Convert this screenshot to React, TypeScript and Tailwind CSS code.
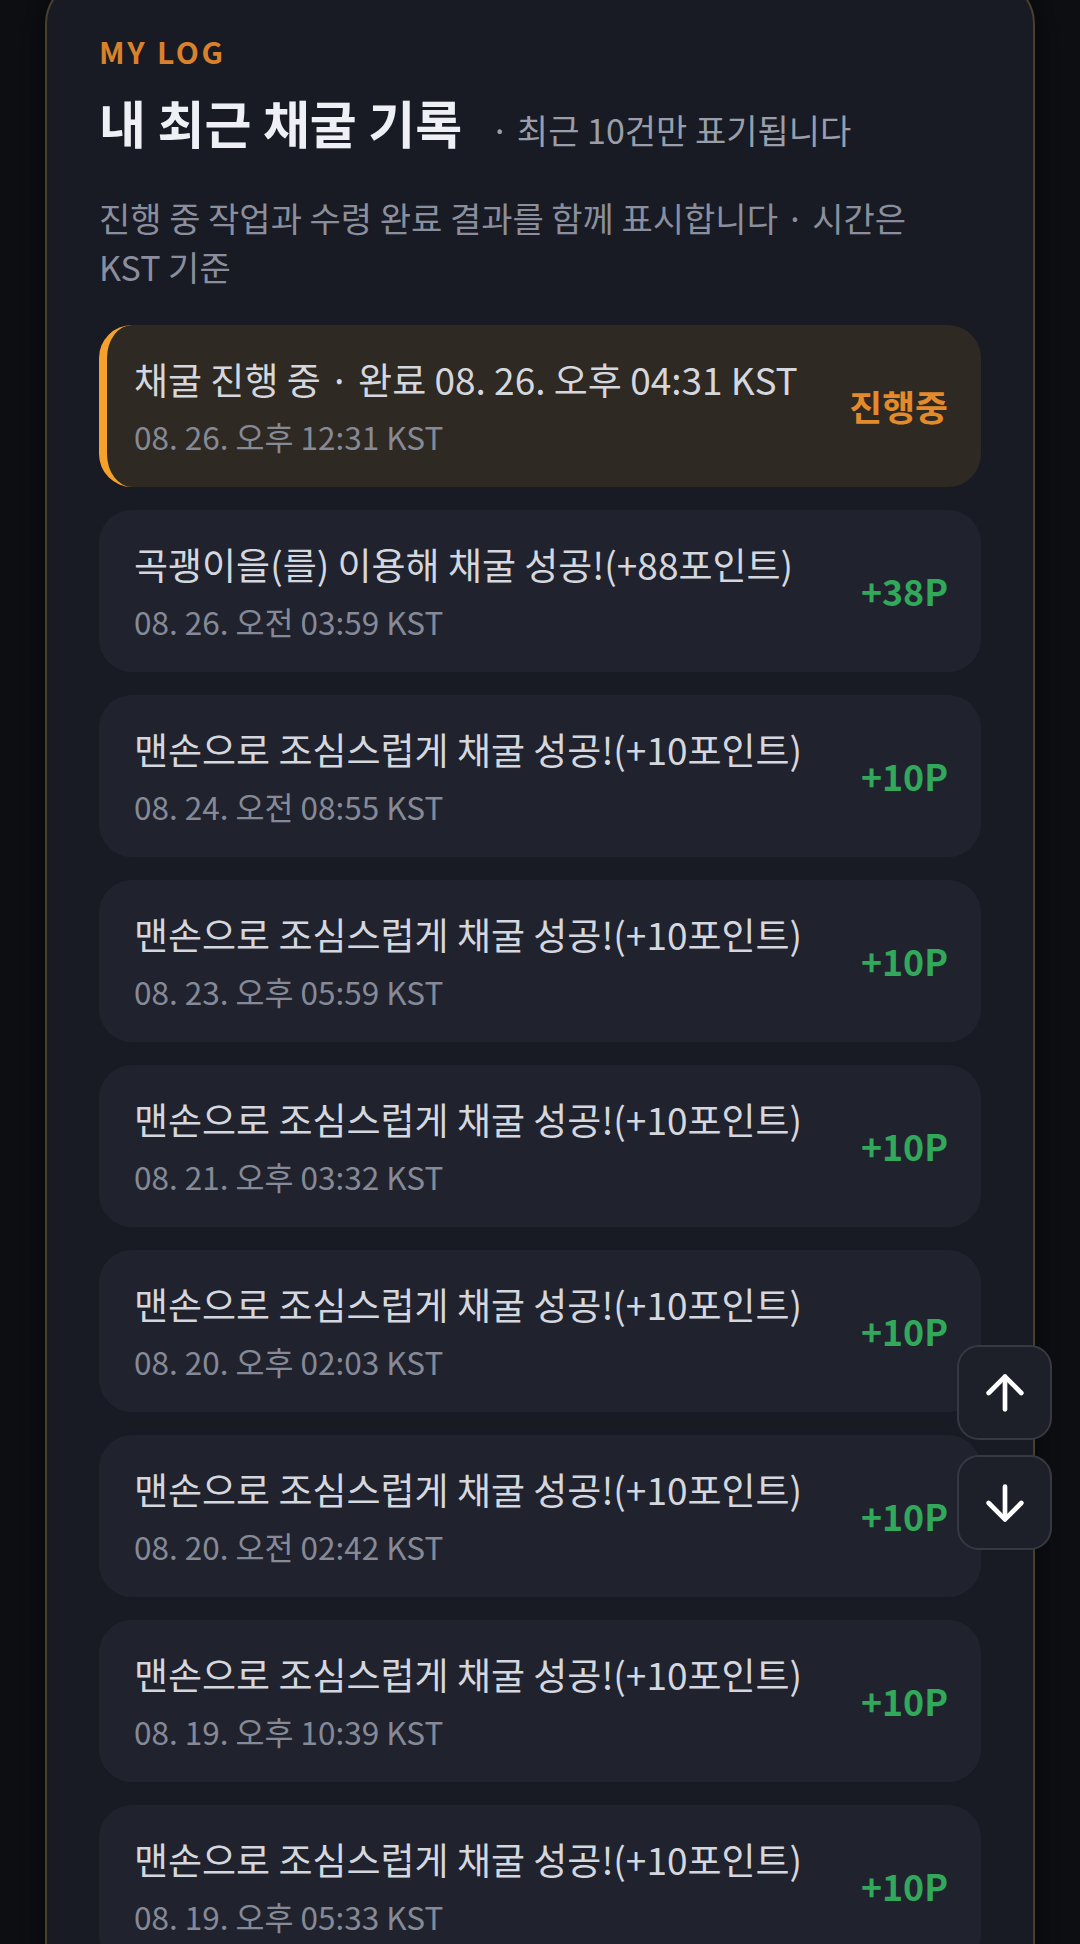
import React from "react";
import { ArrowUp, ArrowDown } from "lucide-react";

type Item = { title: string; date: string; value: string; active?: boolean };

const items: Item[] = [
  { title: "채굴 진행 중 · 완료 08. 26. 오후 04:31 KST", date: "08. 26. 오후 12:31 KST", value: "진행중", active: true },
  { title: "곡괭이을(를) 이용해 채굴 성공!(+88포인트)", date: "08. 26. 오전 03:59 KST", value: "+38P" },
  { title: "맨손으로 조심스럽게 채굴 성공!(+10포인트)", date: "08. 24. 오전 08:55 KST", value: "+10P" },
  { title: "맨손으로 조심스럽게 채굴 성공!(+10포인트)", date: "08. 23. 오후 05:59 KST", value: "+10P" },
  { title: "맨손으로 조심스럽게 채굴 성공!(+10포인트)", date: "08. 21. 오후 03:32 KST", value: "+10P" },
  { title: "맨손으로 조심스럽게 채굴 성공!(+10포인트)", date: "08. 20. 오후 02:03 KST", value: "+10P" },
  { title: "맨손으로 조심스럽게 채굴 성공!(+10포인트)", date: "08. 20. 오전 02:42 KST", value: "+10P" },
  { title: "맨손으로 조심스럽게 채굴 성공!(+10포인트)", date: "08. 19. 오후 10:39 KST", value: "+10P" },
  { title: "맨손으로 조심스럽게 채굴 성공!(+10포인트)", date: "08. 19. 오후 05:33 KST", value: "+10P" },
  { title: "맨손으로 조심스럽게 채굴 성공!(+10포인트)", date: "08. 18. 오후 09:12 KST", value: "+10P" },
];

function Row({ item }: { item: Item }) {
  return (
    <div
      className={
        item.active
          ? "flex items-center justify-between rounded-[33px] border-l-[8px] border-[#f4a22c] bg-[#2e2922] pl-[27px] pr-[33px] pt-[27px] pb-[28px]"
          : "flex items-center justify-between rounded-[33px] bg-[#20232e] pl-[35px] pr-[33px] pt-[27px] pb-[28px]"
      }
    >
      <div className="flex min-w-0 flex-col gap-[7px]">
        <div className="whitespace-nowrap text-[37px] leading-[54px] text-[#d5d7de]">{item.title}</div>
        <div className="whitespace-nowrap text-[31.5px] leading-[46px] text-[#868a97]">{item.date}</div>
      </div>
      <div
        className={
          item.active
            ? "shrink-0 text-[35.75px] font-bold leading-none text-[#e38a2b]"
            : "shrink-0 text-[35.75px] font-bold leading-none text-[#31a85a]"
        }
      >
        {item.value}
      </div>
    </div>
  );
}

export default function App() {
  return (
    <div
      className="relative h-[1944px] w-[1080px] overflow-hidden bg-[#0e0f13]"
      style={{ fontFamily: '"Noto Sans CJK KR", "Noto Sans", sans-serif' }}
    >
      <div className="mx-[45px] -mt-[22px] rounded-[46px] border-2 border-[#4a3f2d] bg-[#181b24] px-[52px] pt-[52px] pb-[60px] shadow-[0_0_40px_rgba(0,0,0,0.6)]">
        <div className="text-[30px] font-bold leading-[39px] tracking-[0.09em] text-[#d9822b]">MY LOG</div>
        <div className="mt-[20px] flex items-baseline gap-[28px]">
          <h1 className="text-[51px] font-bold leading-[62px] text-[#eef0f6]">내 최근 채굴 기록</h1>
          <span className="text-[34px] text-[#9a9eab]">· 최근 10건만 표기됩니다</span>
        </div>
        <p className="mt-[38px] max-w-[850px] text-[34px] leading-[49px] text-[#8b8f9d]">
          진행 중 작업과 수령 완료 결과를 함께 표시합니다 · 시간은 KST 기준
        </p>
        <div className="mt-[34px] flex flex-col gap-[23px]">
          {items.map((it, i) => (
            <Row key={i} item={it} />
          ))}
        </div>
      </div>

      <div className="absolute right-[28px] top-[1345px] flex flex-col gap-[15px]">
        <button className="flex h-[95px] w-[95px] items-center justify-center rounded-[22px] border-2 border-[#363944] bg-[#1d2029] text-white">
          <ArrowUp size={56} strokeWidth={2} />
        </button>
        <button className="flex h-[95px] w-[95px] items-center justify-center rounded-[22px] border-2 border-[#363944] bg-[#1d2029] text-white">
          <ArrowDown size={56} strokeWidth={2} />
        </button>
      </div>
    </div>
  );
}
